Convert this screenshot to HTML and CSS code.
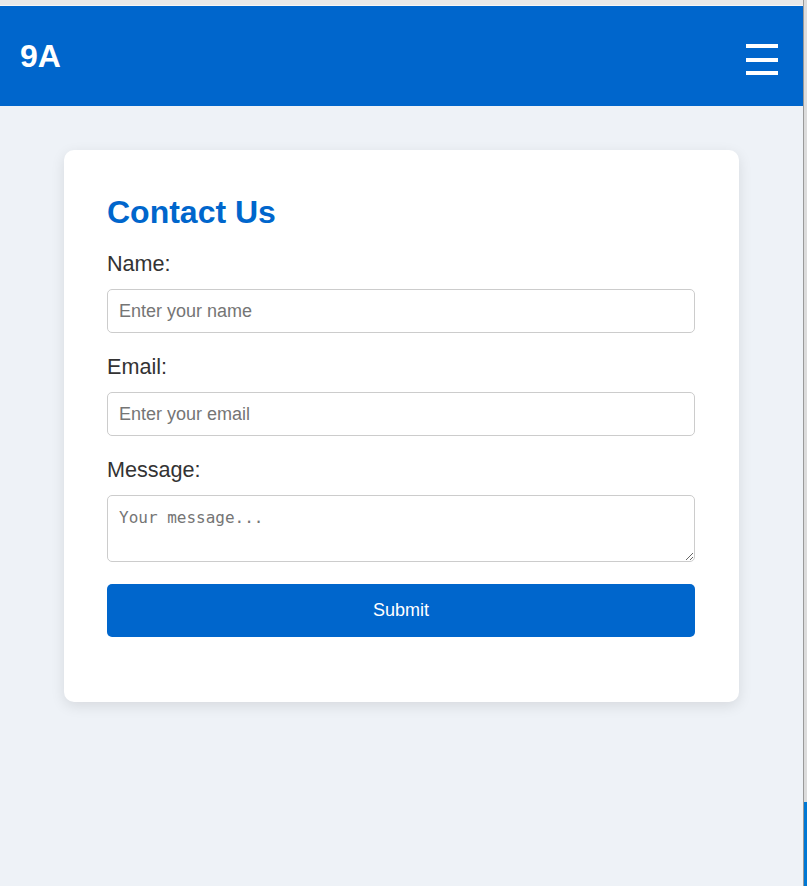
FILE: index.html
```html
<!DOCTYPE html>
<html lang="en">
<head>
<meta charset="utf-8">
<title>Contact Us</title>
<link rel="stylesheet" href="styles.css">
</head>
<body>
<div class="page">
  <div class="topstrip"></div>
  <header class="header">
    <div class="logo">9A</div>
    <button class="menu" aria-label="Menu"><span></span><span></span><span></span></button>
  </header>
  <main class="main">
    <section class="card">
      <h2 class="title">Contact Us</h2>
      <form class="form">
        <label class="label" for="name">Name:</label>
        <input class="field" id="name" type="text" placeholder="Enter your name">
        <label class="label" for="email">Email:</label>
        <input class="field" id="email" type="email" placeholder="Enter your email">
        <label class="label" for="msg">Message:</label>
        <textarea class="field area" id="msg" placeholder="Your message..."></textarea>
        <button class="submit" type="button">Submit</button>
      </form>
    </section>
  </main>
</div>
<div class="edge">
  <div class="edge-top"></div>
  <div class="edge-bottom"></div>
</div>
</body>
</html>
```
FILE: styles.css
```css
html, body {
  margin: 0;
  padding: 0;
  height: 100%;
}
body {
  display: flex;
  font-family: "Liberation Sans", Arial, sans-serif;
  background: #eef2f7;
  overflow: hidden;
}
.page {
  flex: 1;
  display: flex;
  flex-direction: column;
  min-width: 0;
}
.topstrip {
  height: 6px;
  background: #e9e9e9;
  border-bottom: 1px solid #f6f6f6;
  box-sizing: border-box;
}
.header {
  height: 100px;
  background: #0066cc;
  display: flex;
  align-items: center;
  justify-content: space-between;
  padding: 0 25px 0 20px;
  flex-shrink: 0;
}
.logo {
  color: #fff;
  font-weight: bold;
  font-size: 32px;
  padding-top: 1px;
}
.menu {
  align-self: flex-start;
  margin-top: 38px;
  width: 32px;
  height: 31px;
  padding: 0;
  border: 0;
  background: transparent;
  display: flex;
  flex-direction: column;
  justify-content: space-between;
}
.menu span {
  display: block;
  height: 4px;
  background: #fff;
}
.main {
  flex: 1;
  padding-top: 44px;
}
.card {
  width: 675px;
  margin: 0 auto;
  box-sizing: border-box;
  background: #fff;
  border-radius: 10px;
  box-shadow: 0 4px 14px rgba(0, 0, 0, 0.1);
  padding: 44px 44px 65px 43px;
}
.title {
  margin: 0 0 21px;
  color: #0066cc;
  font-size: 32px;
  font-weight: bold;
  line-height: 37px;
}
.form {
  display: flex;
  flex-direction: column;
}
.label {
  font-size: 21.6px;
  line-height: 24px;
  color: #333;
  margin-bottom: 13px;
}
.field {
  box-sizing: border-box;
  height: 44px;
  border: 1px solid #ccc;
  border-radius: 5px;
  padding: 0 11px;
  font-family: "Liberation Sans", Arial, sans-serif;
  font-size: 18px;
  color: #333;
  margin: 0 0 22px;
  background: #fff;
}
.field::placeholder {
  color: #757575;
}
.area {
  height: 67px;
  padding: 12px 11px;
  font-family: "DejaVu Sans Mono", "Liberation Mono", monospace;
  font-size: 16px;
  line-height: 20px;
  resize: vertical;
}
.submit {
  height: 53px;
  border: 0;
  border-radius: 5px;
  background: #0066cc;
  color: #fff;
  font-family: "Liberation Sans", Arial, sans-serif;
  font-size: 18px;
  padding: 0;
}
.edge {
  width: 4px;
  display: flex;
  flex-direction: column;
  border-left: 1px solid #9a9a9a;
  box-sizing: border-box;
}
.edge-top {
  flex: 1;
  background: #dcdcdc;
}
.edge-bottom {
  height: 84px;
  background: #0078d4;
}
```
